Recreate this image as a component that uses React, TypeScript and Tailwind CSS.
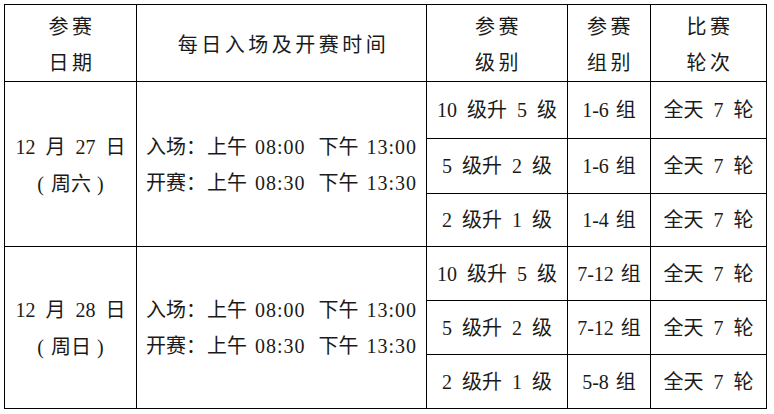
import React from 'react';

interface LevelRow {
    level: string;
    group: string;
    rounds: string;
}

interface DayBlock {
    date: string;
    weekday: string;
    entry: [string, string];
    start: [string, string];
    rows: LevelRow[];
}

const days: DayBlock[] = [
    {
        date: '12 月 27 日',
        weekday: '周六',
        entry: ['08:00', '13:00'],
        start: ['08:30', '13:30'],
        rows: [
            { level: '10 级升 5 级', group: '1-6 组', rounds: '全天 7 轮' },
            { level: '5 级升 2 级', group: '1-6 组', rounds: '全天 7 轮' },
            { level: '2 级升 1 级', group: '1-4 组', rounds: '全天 7 轮' },
        ],
    },
    {
        date: '12 月 28 日',
        weekday: '周日',
        entry: ['08:00', '13:00'],
        start: ['08:30', '13:30'],
        rows: [
            { level: '10 级升 5 级', group: '7-12 组', rounds: '全天 7 轮' },
            { level: '5 级升 2 级', group: '7-12 组', rounds: '全天 7 轮' },
            { level: '2 级升 1 级', group: '5-8 组', rounds: '全天 7 轮' },
        ],
    },
];

const rowHeights = [
    ['h-[57px]', 'h-[55px]', 'h-[53px]'],
    ['h-[54px]', 'h-[54px]', 'h-[54px]'],
];

const cell = 'border border-black p-0 text-center align-middle';

const TimeLine: React.FC<{ label: string; times: [string, string] }> = ({ label, times }) => (
    <div className="whitespace-nowrap">
        {label}：<span className="ml-[1px]">上午</span>
        <span className="ml-[8px] tracking-[1px]">{times[0]}</span>
        <span className="ml-[13px]">下午</span>
        <span className="ml-[8px] tracking-[1px]">{times[1]}</span>
    </div>
);

const App: React.FC = () => {
    return (
        <div className="min-h-[414px] w-[774px] bg-white pl-[4px] pt-[4px] text-[20px] text-[#1a1a1a] font-['Liberation_Serif','Noto_Sans_CJK_SC',serif] [word-spacing:5px]">
            <table className="table-fixed border-collapse">
                <colgroup>
                    <col className="w-[132px]" />
                    <col className="w-[290px]" />
                    <col className="w-[141px]" />
                    <col className="w-[83px]" />
                    <col className="w-[116px]" />
                </colgroup>
                <thead>
                    <tr className="h-[76px] leading-[36px] tracking-[3.5px]">
                        <th className={`${cell} pl-[3px] pt-[4px] font-normal`}>
                            参赛
                            <br />
                            日期
                        </th>
                        <th className={`${cell} pl-[4px] pt-[4px] font-normal`}>每日入场及开赛时间</th>
                        <th className={`${cell} pl-[3px] pt-[4px] font-normal`}>
                            参赛
                            <br />
                            级别
                        </th>
                        <th className={`${cell} pl-[3px] pt-[4px] font-normal`}>
                            参赛
                            <br />
                            组别
                        </th>
                        <th className={`${cell} pl-[3px] pt-[4px] font-normal`}>
                            比赛
                            <br />
                            轮次
                        </th>
                    </tr>
                </thead>
                <tbody>
                    {days.map((day, d) =>
                        day.rows.map((row, i) => (
                            <tr key={`${d}-${i}`} className={rowHeights[d][i]}>
                                {i === 0 && (
                                    <>
                                        <td rowSpan={3} className={`${cell} pt-[3px] leading-[37px]`}>
                                            <div className="whitespace-nowrap">{day.date}</div>
                                            <div className="whitespace-nowrap [word-spacing:0px]">
                                                <span className="mr-[7px]">(</span>
                                                {day.weekday}
                                                <span className="ml-[6px]">)</span>
                                            </div>
                                        </td>
                                        <td rowSpan={3} className={`${cell} pl-[9px] pt-[1px] text-left leading-[36px] [word-spacing:0px]`}>
                                            <TimeLine label="入场" times={day.entry} />
                                            <TimeLine label="开赛" times={day.start} />
                                        </td>
                                    </>
                                )}
                                <td className={`${cell} whitespace-nowrap`}>{row.level}</td>
                                <td className={`${cell} whitespace-nowrap [word-spacing:2px]`}>{row.group}</td>
                                <td className={`${cell} whitespace-nowrap`}>{row.rounds}</td>
                            </tr>
                        ))
                    )}
                </tbody>
            </table>
        </div>
    );
};

export default App;
